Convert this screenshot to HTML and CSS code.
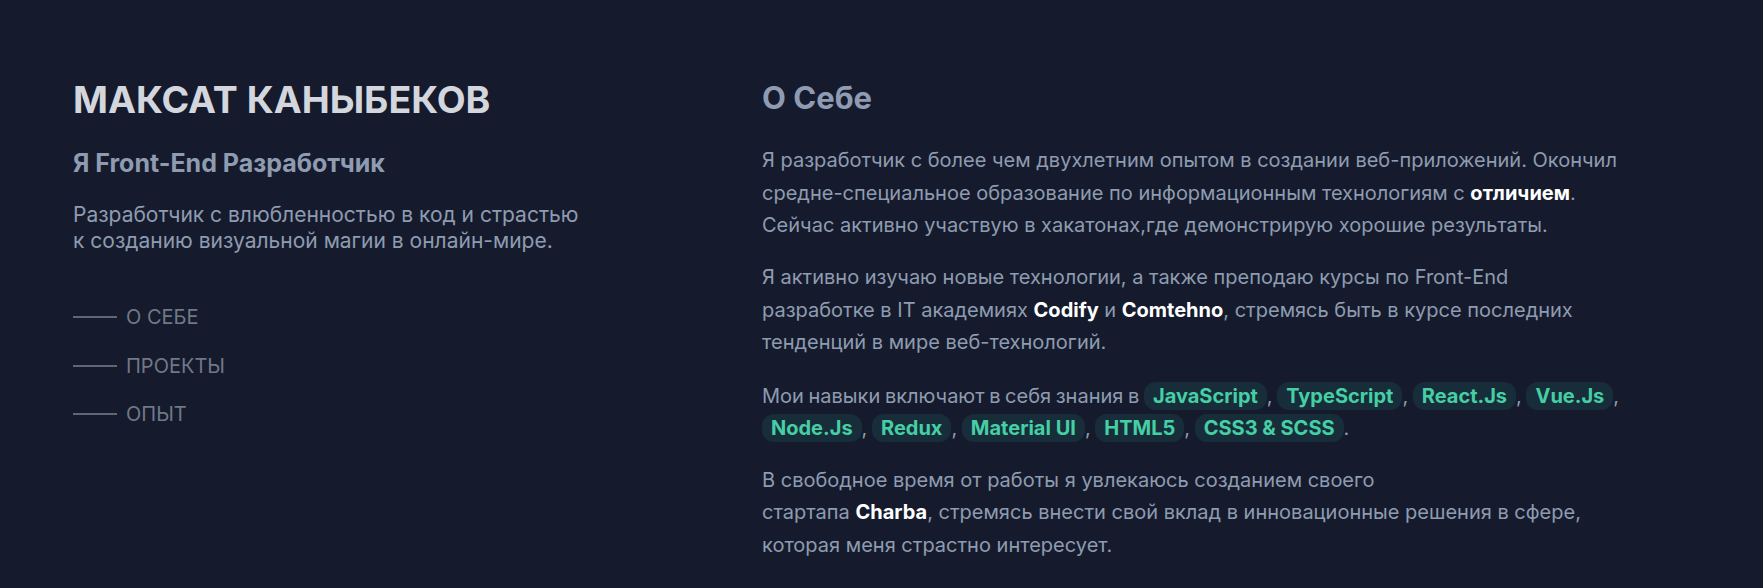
FILE: index.html
```html
<!DOCTYPE html>
<html lang="ru">
<head>
<meta charset="utf-8">
<title>Максат Каныбеков</title>
<link rel="stylesheet" href="styles.css">
</head>
<body>
<div class="page">
  <header class="intro">
    <h1 class="name">МАКСАТ КАНЫБЕКОВ</h1>
    <h2 class="role">Я Front-End Разработчик</h2>
    <p class="tagline">Разработчик с влюбленностью в код и страстью к созданию визуальной магии в онлайн-мире.</p>
    <nav class="nav">
      <a class="nav-item" href="#about"><span class="nav-line"></span><span class="nav-text">О СЕБЕ</span></a>
      <a class="nav-item" href="#projects"><span class="nav-line"></span><span class="nav-text">ПРОЕКТЫ</span></a>
      <a class="nav-item" href="#experience"><span class="nav-line"></span><span class="nav-text">ОПЫТ</span></a>
    </nav>
  </header>
  <main class="about" id="about">
    <h3 class="about-title">О Себе</h3>
    <p class="text first">Я разработчик с более чем двухлетним опытом в создании веб-приложений. Окончил средне-специальное образование по информационным технологиям с <b class="hl">отличием</b>. Сейчас активно участвую в хакатонах,где демонстрирую хорошие результаты.</p>
    <p class="text">Я активно изучаю новые технологии, а также преподаю курсы по Front-End<br>разработке в IT академиях <b class="hl">Codify</b> и <b class="hl">Comtehno</b>, стремясь быть в курсе последних тенденций в мире веб-технологий.</p>
    <p class="text skills">Мои навыки включают в себя знания в <span class="pill">JavaScript</span>, <span class="pill">TypeScript</span>, <span class="pill">React.Js</span>, <span class="pill">Vue.Js</span>, <span class="pill">Node.Js</span>, <span class="pill">Redux</span>, <span class="pill">Material UI</span>, <span class="pill">HTML5</span>, <span class="pill">CSS3 &amp; SCSS</span>.</p>
    <p class="text last">В свободное время от работы я увлекаюсь созданием своего<br>стартапа <b class="hl">Charba</b>, стремясь внести свой вклад в инновационные решения в сфере, которая меня страстно интересует.</p>
  </main>
</div>
</body>
</html>
```

FILE: styles.css
```css
html, body {
  margin: 0;
  padding: 0;
  background: #151b2d;
}
body {
  font-family: Inter, "Noto Sans", sans-serif;
  color: #94a3b8;
  height: 588px;
  overflow: hidden;
}
.page {
  display: grid;
  grid-template-columns: 689px 880px;
  padding: 80px 0 0 73px;
}
.intro {
  display: flex;
  flex-direction: column;
  align-items: flex-start;
}
.name {
  margin: 0;
  font-size: 37.5px;
  line-height: 40px;
  font-weight: 700;
  color: #d3d6dc;
}
.role {
  margin: 28px 0 0;
  font-size: 25px;
  line-height: 30px;
  font-weight: 700;
  color: #8f9bb1;
}
.tagline {
  margin: 24px 0 0;
  max-width: 520px;
  font-size: 21px;
  line-height: 26px;
  color: #8f9bb0;
}
.nav {
  margin-top: 51px;
  display: flex;
  flex-direction: column;
  gap: 24.5px;
}
.nav-item {
  display: flex;
  align-items: center;
  gap: 9px;
  text-decoration: none;
  height: 24px;
}
.nav-line {
  width: 44px;
  height: 2px;
  background: #5f6676;
}
.nav-text {
  font-size: 20px;
  line-height: 24px;
  color: #717886;
}
.about-title {
  margin: 0;
  font-size: 31px;
  line-height: 36px;
  font-weight: 700;
  color: #8f9bb3;
}
.text {
  margin: 19.5px 0 0;
  font-size: 20px;
  line-height: 32.5px;
  color: #8f9bb0;
}
.text.first {
  margin-top: 28px;
}
.text.skills {
  margin-top: 21px;
  word-spacing: -1px;
}
.text.last {
  margin-top: 19px;
}
.hl {
  color: #ffffff;
  font-weight: 700;
}
.pill {
  display: inline;
  padding: 2px 9px;
  border-radius: 12px;
  background: #172e3a;
  color: #46cfa5;
  font-weight: 700;
  word-spacing: 0;
}
```
